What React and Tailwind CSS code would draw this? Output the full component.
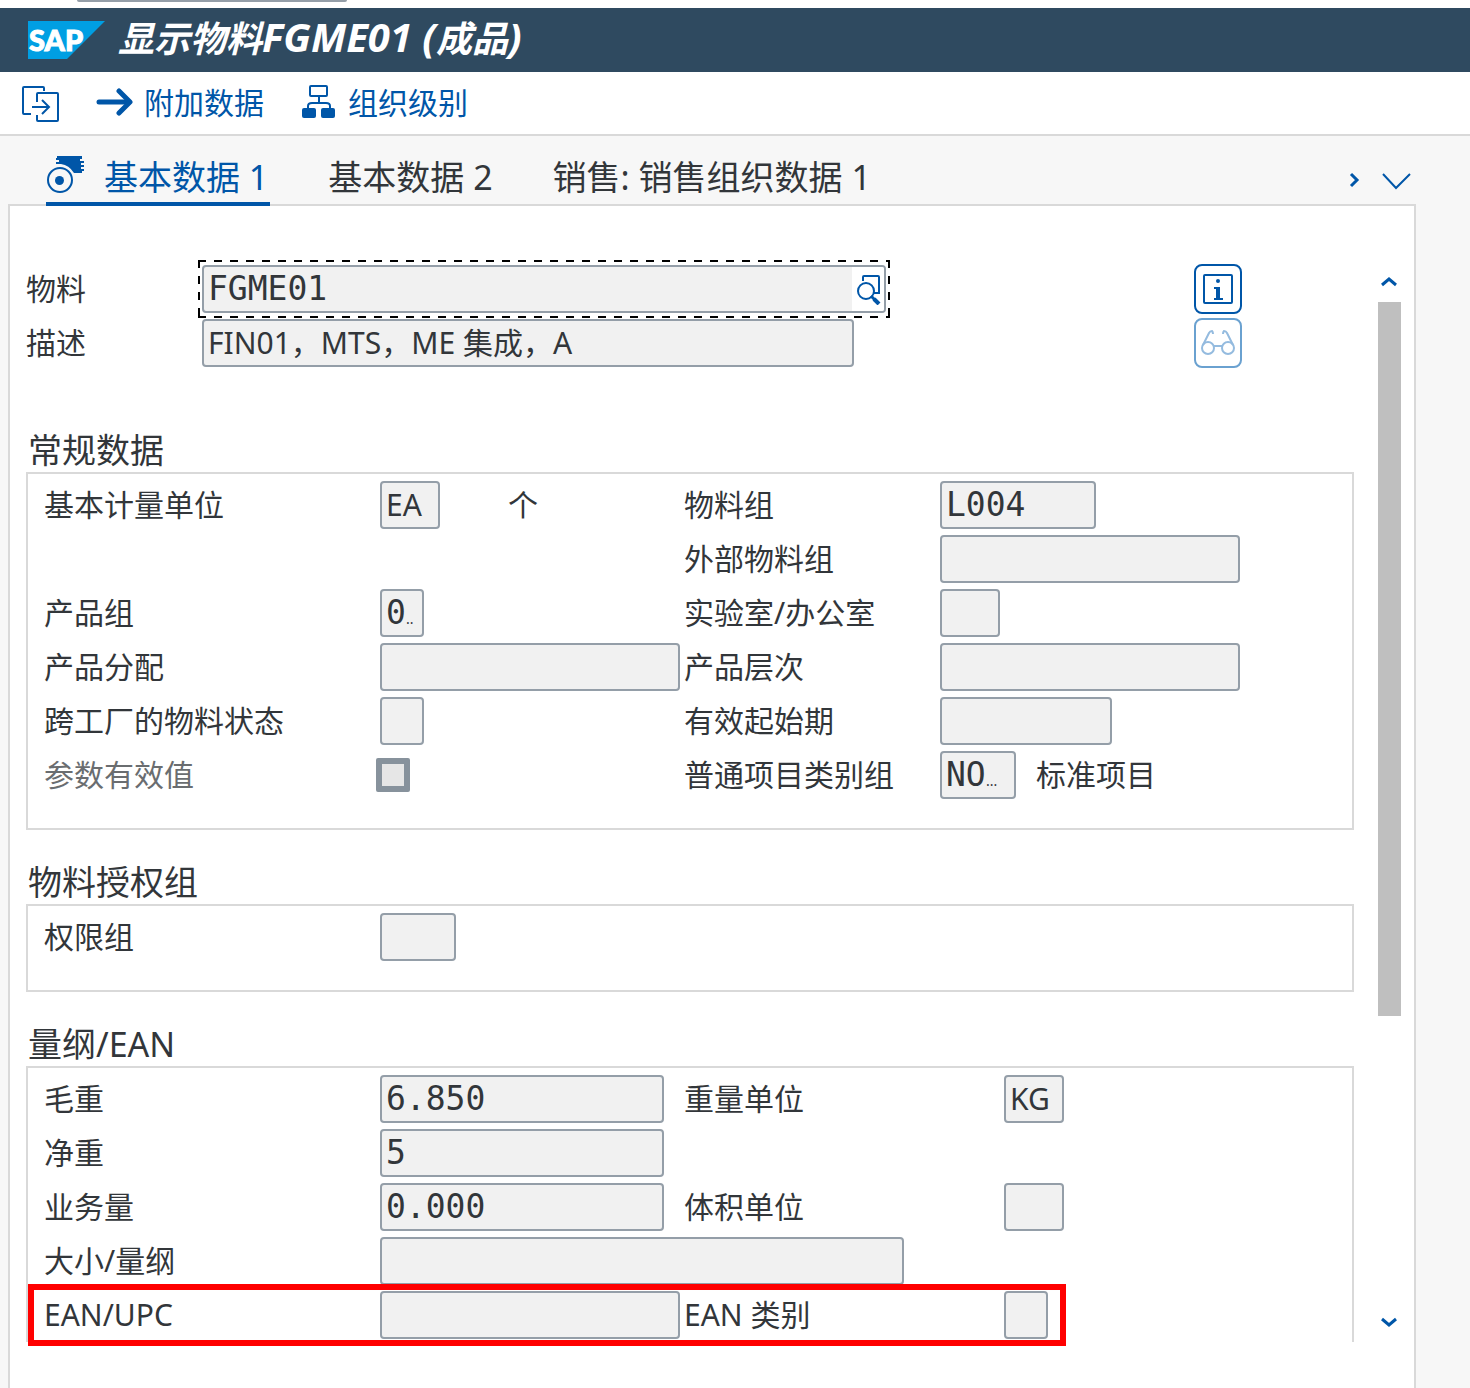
import React, { useState } from 'react';

const SapLogo = () => (
  <svg width="78" height="38" viewBox="0 0 78 38" role="img" aria-label="SAP">
    <path d="M0 0H77L39 38H0Z" fill="#009fe3" />
    <text
      x="1"
      y="30"
      fill="#fff"
      stroke="#fff"
      strokeWidth="1"
      fontFamily="Lato, sans-serif"
      fontWeight="900"
      fontSize="29"
    >
      SAP
    </text>
  </svg>
);

const ExitIcon = () => (
  <svg width="40" height="38" viewBox="0 0 40 38" fill="none" stroke="currentColor" strokeWidth="2">
    <path d="M22 7V4Q22 3 21 3H2Q1 3 1 4V29Q1 30 2 30H9" />
    <path d="M15 18V10Q15 9 16 9H35Q36 9 36 10V36Q36 37 35 37H16Q15 37 15 36V31" />
    <path d="M10 23H27M20 16L27 23L20 30" />
  </svg>
);

const ArrowIcon = () => (
  <svg width="38" height="30" viewBox="0 0 38 30" fill="none" stroke="currentColor" strokeWidth="5">
    <path d="M3 14H33" strokeLinecap="round" />
    <path d="M23 3L34 14L23 25" strokeLinecap="round" strokeLinejoin="round" />
  </svg>
);

const OrgIcon = () => (
  <svg width="34" height="36" viewBox="0 0 34 36">
    <g fill="none" stroke="currentColor" strokeWidth="2">
      <rect x="8" y="1" width="17" height="10" rx="1" />
      <path d="M17 11V18M6 25V21Q6 18 10 18H24Q28 18 28 21V25" />
    </g>
    <rect x="0" y="23" width="14" height="10" rx="2" fill="currentColor" />
    <rect x="19" y="23" width="14" height="10" rx="2" fill="currentColor" />
  </svg>
);

const MaterialIcon = () => (
  <svg width="38" height="42" viewBox="0 0 38 42">
    <path
      d="M11 0H36V3H34V5H38V7H35V9H38V11H35V13H38V15H36V17H28Q23 9 15 8H10V6H13V4H10V2H11Z"
      fill="currentColor"
    />
    <circle cx="14" cy="24" r="12" fill="none" stroke="currentColor" strokeWidth="2" />
    <circle cx="13.500" cy="24.500" r="4.500" fill="currentColor" />
  </svg>
);

const SearchHelpIcon = () => (
  <svg width="26" height="32" viewBox="0 0 26 32" fill="none" stroke="currentColor">
    <path d="M6 8V4Q6 3 7 3H21Q22 3 22 4V20H17" strokeWidth="2" />
    <circle cx="9" cy="18" r="8" strokeWidth="2" />
    <path d="M14 23L18 27" strokeWidth="3" />
    <path d="M17 26L22 31" strokeWidth="4" />
  </svg>
);

const InfoIcon = () => (
  <svg width="30" height="30" viewBox="0 0 30 30">
    <rect x="1" y="1" width="28" height="28" rx="1" fill="none" stroke="currentColor" strokeWidth="2" />
    <circle cx="15" cy="7" r="2" fill="currentColor" />
    <path d="M11 13H17V24H20V26H11V24H13V15H11Z" fill="currentColor" />
  </svg>
);

const GlassesIcon = () => (
  <svg width="34" height="26" viewBox="0 0 34 26" fill="none" stroke="currentColor" strokeWidth="2">
    <circle cx="7" cy="18" r="6" />
    <circle cx="27" cy="18" r="6" />
    <path d="M13 16H21" />
    <path d="M2 15L8 3Q9 1 11 1Q12 2 12 4" />
    <path d="M32 15L26 3Q25 1 23 1Q22 2 22 4" />
  </svg>
);

const Chevron = ({ d, width = 18, height = 18, stroke = 3 }) => (
  <svg width={width} height={height} viewBox={`0 0 ${width} ${height}`} fill="none" stroke="currentColor" strokeWidth={stroke}>
    <path d={d} />
  </svg>
);

const Label = ({ htmlFor, children, className = '' }) => (
  <label htmlFor={htmlFor} className={`whitespace-nowrap ${className}`}>
    {children}
  </label>
);

// Display-only field; `more` holds the dots shown when the value is cut off
const Field = ({ id, width, value = '', mono = false, more, children }) => {
  let inputWidth = 'w-full';
  if (more === '..') inputWidth = 'w-6 shrink-0';
  if (more === '...') inputWidth = 'w-11 shrink-0';

  return (
    <div className={`relative flex h-12 items-stretch rounded-[4px] border-2 border-[#949ea8] bg-[#f1f1f1] ${width}`}>
      <input
        id={id}
        readOnly
        value={value}
        className={`min-w-0 bg-transparent pl-1 outline-none ${inputWidth} ${
          mono ? "font-['DejaVu_Sans_Mono',monospace] text-[33px]" : ''
        }`}
      />
      {more && <span className="self-end text-[14px] leading-8">{more}</span>}
      {children}
    </div>
  );
};

const Group = ({ title, open = false, children }) => (
  <section className="mt-[30px]">
    <h2 className="pl-0.5 text-[34px] leading-[44px]">{title}</h2>
    <div className={`border-2 border-[#d9d9d9] pt-1 ${open ? 'border-b-0' : 'pb-[26px]'}`}>{children}</div>
  </section>
);

const Row = ({ wide = false, children }) => (
  <div
    className={`relative grid h-[54px] items-center pl-4 ${
      wide ? 'grid-cols-[336px_304px_320px_1fr]' : 'grid-cols-[336px_304px_256px_1fr]'
    }`}
  >
    {children}
  </div>
);

const FocusFrame = () => (
  <span className="pointer-events-none absolute -inset-x-1.5 -inset-y-[7px]">
    <span className="absolute inset-x-0 top-0 h-0.5 bg-[repeating-linear-gradient(90deg,#000_0_8px,transparent_8px_16px)]" />
    <span className="absolute inset-x-0 bottom-0 h-0.5 bg-[repeating-linear-gradient(90deg,#000_0_8px,transparent_8px_16px)]" />
    <span className="absolute inset-y-0 left-0 w-0.5 bg-[repeating-linear-gradient(180deg,#000_0_8px,transparent_8px_16px)]" />
    <span className="absolute inset-y-0 right-0 w-0.5 bg-[repeating-linear-gradient(180deg,#000_0_8px,transparent_8px_16px)]" />
  </span>
);

const tabs = ['基本数据 1', '基本数据 2', '销售: 销售组织数据 1'];

export default function App() {
  const [activeTab, setActiveTab] = useState(0);

  return (
    <div
      lang="zh-CN"
      className="flex min-h-screen flex-col bg-[#f7f7f7] font-['Noto_Sans','Noto_Sans_CJK_SC',sans-serif] text-[30px] leading-10 text-[#32363a]"
    >
      <div className="h-2 bg-white">
        <div className="ml-[77px] h-0.5 w-[270px] rounded-b bg-[#949ea8]" />
      </div>

      {/* Title bar */}
      <header className="flex h-16 items-center gap-3 bg-[#2f4a60] pl-7 text-white">
        <SapLogo />
        <h1 className="pb-1 text-[36px] font-bold italic">
          显示物料<span className="text-[40px]">FGME01 (</span>成品<span className="text-[40px]">)</span>
        </h1>
      </header>

      {/* Toolbar */}
      <div className="flex h-16 items-center border-b-2 border-[#d9d9d9] bg-white pl-[22px] text-[#0056a8]">
        <button type="button" aria-label="退出" className="mr-[34px]">
          <ExitIcon />
        </button>
        <button type="button" className="mr-[38px] flex items-center gap-2.5">
          <ArrowIcon />
          附加数据
        </button>
        <button type="button" className="flex items-center gap-3">
          <OrgIcon />
          组织级别
        </button>
      </div>

      {/* Tabs */}
      <nav className="relative z-10 -mb-0.5 flex h-[70px] pr-[58px] pl-[46px]">
        <div role="tablist" className="flex flex-1 gap-[58px]">
          {tabs.map((tab, i) => (
            <button
              key={tab}
              type="button"
              role="tab"
              aria-selected={activeTab === i}
              onClick={() => setActiveTab(i)}
              className={`flex items-center gap-5 border-b-4 pt-4 pr-0.5 text-[34px] whitespace-nowrap ${
                activeTab === i ? 'border-[#0056a8] text-[#0056a8]' : 'border-transparent'
              }`}
            >
              {i === 0 && <MaterialIcon />}
              {tab}
            </button>
          ))}
        </div>
        <div className="flex items-center gap-[22px] pt-5 text-[#0056a8]">
          <button type="button" aria-label="下一个">
            <Chevron width={12} d="M3 2L9 8L3 14" />
          </button>
          <button type="button" aria-label="全部标签">
            <Chevron width={30} stroke={2} d="M1 2L14 16L28 2" />
          </button>
        </div>
      </nav>

      {/* Tab content */}
      <main className="mr-[54px] ml-2 flex-1 border-2 border-b-0 border-[#d9d9d9] bg-white">
        <div className="flex pt-14 pr-[13px] pl-4">
          <div className="min-w-0 flex-1">
            <div className="grid grid-cols-[176px_1fr_160px]">
              <div className="flex h-[54px] items-center">
                <Label htmlFor="material">物料</Label>
              </div>
              <div className="flex h-[54px] items-center">
                <Field id="material" width="w-[684px]" value="FGME01" mono>
                  <button
                    type="button"
                    aria-label="搜索帮助"
                    className="flex w-8 shrink-0 items-center justify-center rounded-r-[2px] bg-white pl-1 text-[#0056a8]"
                  >
                    <SearchHelpIcon />
                  </button>
                  <FocusFrame />
                </Field>
              </div>
              <div className="flex h-[54px] items-center">
                <button
                  type="button"
                  aria-label="信息"
                  className="flex h-[50px] w-12 items-center justify-center rounded-lg border-2 border-[#0056a8] text-[#0056a8]"
                >
                  <InfoIcon />
                </button>
              </div>
              <div className="flex h-[54px] items-center">
                <Label htmlFor="description">描述</Label>
              </div>
              <div className="flex h-[54px] items-center">
                <Field id="description" width="w-[652px]" value="FIN01，MTS，ME 集成，A" />
              </div>
              <div className="flex h-[54px] items-center">
                <button
                  type="button"
                  aria-label="显示"
                  disabled
                  className="flex h-[50px] w-12 items-center justify-center rounded-lg border-2 border-[#6aa1d0] text-[#94bbdf]"
                >
                  <GlassesIcon />
                </button>
              </div>
            </div>

            <div className="pt-7">
              <Group title="常规数据">
                <Row>
                  <Label htmlFor="unit">基本计量单位</Label>
                  <div className="flex items-center gap-[68px]">
                    <Field id="unit" width="w-[60px]" value="EA" />
                    <span>个</span>
                  </div>
                  <Label htmlFor="material-group">物料组</Label>
                  <Field id="material-group" width="w-[156px]" value="L004" mono />
                </Row>
                <Row>
                  <Label htmlFor="external-group" className="col-start-3">外部物料组</Label>
                  <Field id="external-group" width="w-[300px]" />
                </Row>
                <Row>
                  <Label htmlFor="division">产品组</Label>
                  <Field id="division" width="w-11" value="0" mono more=".." />
                  <Label htmlFor="lab">实验室/办公室</Label>
                  <Field id="lab" width="w-[60px]" />
                </Row>
                <Row>
                  <Label htmlFor="allocation">产品分配</Label>
                  <Field id="allocation" width="w-[300px]" />
                  <Label htmlFor="hierarchy">产品层次</Label>
                  <Field id="hierarchy" width="w-[300px]" />
                </Row>
                <Row>
                  <Label htmlFor="plant-status">跨工厂的物料状态</Label>
                  <Field id="plant-status" width="w-11" />
                  <Label htmlFor="valid-from">有效起始期</Label>
                  <Field id="valid-from" width="w-[172px]" />
                </Row>
                <Row>
                  <Label htmlFor="effectivity" className="text-[#6a6d70]">参数有效值</Label>
                  <input
                    id="effectivity"
                    type="checkbox"
                    disabled
                    className="-ml-1 size-[34px] appearance-none rounded-[2px] border-6 border-[#87929c] bg-[#e6e6e6]"
                  />
                  <Label htmlFor="item-category">普通项目类别组</Label>
                  <div className="flex items-center gap-5">
                    <Field id="item-category" width="w-[76px]" value="NO" mono more="..." />
                    <span>标准项目</span>
                  </div>
                </Row>
              </Group>

              <Group title="物料授权组">
                <Row>
                  <Label htmlFor="auth-group">权限组</Label>
                  <Field id="auth-group" width="w-[76px]" />
                </Row>
              </Group>

              <Group title="量纲/EAN" open>
                <Row wide>
                  <Label htmlFor="gross">毛重</Label>
                  <Field id="gross" width="w-[284px]" value="6.850" mono />
                  <Label htmlFor="weight-unit">重量单位</Label>
                  <Field id="weight-unit" width="w-[60px]" value="KG" />
                </Row>
                <Row wide>
                  <Label htmlFor="net">净重</Label>
                  <Field id="net" width="w-[284px]" value="5" mono />
                </Row>
                <Row wide>
                  <Label htmlFor="volume">业务量</Label>
                  <Field id="volume" width="w-[284px]" value="0.000" mono />
                  <Label htmlFor="volume-unit">体积单位</Label>
                  <Field id="volume-unit" width="w-[60px]" />
                </Row>
                <Row wide>
                  <Label htmlFor="size">大小/量纲</Label>
                  <Field id="size" width="w-[524px]" />
                </Row>
                <Row wide>
                  <Label htmlFor="ean">EAN/UPC</Label>
                  <Field id="ean" width="w-[300px]" />
                  <Label htmlFor="ean-category">EAN 类别</Label>
                  <Field id="ean-category" width="w-11" />
                  {/* Highlight around the EAN fields */}
                  <span className="pointer-events-none absolute -inset-y-1 left-0 w-[1038px] border-6 border-[#ff0000]" />
                </Row>
              </Group>
            </div>
          </div>

          {/* Scroll bar */}
          <div className="ml-6 flex w-[23px] shrink-0 flex-col text-[#0056a8]">
            <button type="button" aria-label="向上滚动" className="flex h-10 items-center justify-center">
              <Chevron d="M1 12L8 6L15 12" />
            </button>
            <div className="flex-1">
              <div className="h-[714px] bg-[#bfbfbf]" />
            </div>
            <button type="button" aria-label="向下滚动" className="flex h-10 items-center justify-center">
              <Chevron d="M1 6L8 12L15 6" />
            </button>
          </div>
        </div>
      </main>
    </div>
  );
}
